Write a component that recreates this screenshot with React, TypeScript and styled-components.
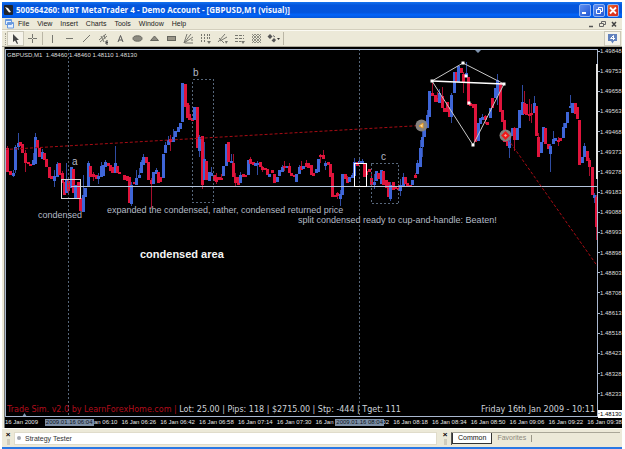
import React from "react";
import styled, { createGlobalStyle, css } from "styled-components";

const GlobalStyle = createGlobalStyle`
  * { box-sizing: border-box; }
  html, body { margin: 0; background: #fff; }
  body { font-family: "Liberation Sans", Arial, sans-serif; font-size: 7px; }
  button { font: inherit; color: inherit; margin: 0; padding: 0; border: 0; background: none; }
`;

const Window = styled.main`
  margin: 2px 3px 0 2px;
  background: #ece9d8;
  border-bottom: 2px solid #2a78e4;
`;

const TitleBar = styled.header`
  display: flex;
  align-items: center;
  gap: 3px;
  height: 16px;
  padding: 0 3px 0 2px;
  background: linear-gradient(#1573ee, #0455dc 20%, #0355dd 65%, #0264fa 80%, #0456d8);
`;

const Title = styled.h1`
  flex: 1;
  margin: 0;
  font: bold 8px/14px "Open Sans", "Noto Sans", sans-serif;
  color: #f4f8ff;
  white-space: nowrap;
  overflow: hidden;
`;

const Controls = styled.div`
  display: flex;
  gap: 2px;
`;

const TitleButton = styled.button<{ $close?: boolean }>`
  display: flex;
  width: 12px;
  height: 13px;
  border: 1px solid #8fb3f3;
  border-radius: 2px;
  background: ${(p) => (p.$close ? "linear-gradient(135deg, #e8792e, #e03a1c 45%, #d52c20)" : "linear-gradient(135deg, #5c8df0, #2458d3)")};
  svg { width: 10px; height: 11px; }
`;

const MenuBar = styled.nav`
  display: flex;
  align-items: center;
  height: 12px;
  padding: 0 3px;
  border-bottom: 1px solid #d3cfbd;
  color: #222;
`;

const MenuItems = styled.div`
  display: flex;
  flex: 1;
  gap: 8px;
  margin-left: 4px;
  line-height: 11px;
`;

const MdiButton = styled.button`
  display: flex;
  width: 11px;
  height: 10px;
  svg { width: 11px; height: 10px; }
`;

const Toolbar = styled.div`
  display: flex;
  align-items: center;
  height: 17px;
  padding: 0 1px 0 3px;
  border-top: 1px solid #fbfaf3;
  border-bottom: 1px solid #aca899;
`;

const Grip = styled.span`
  width: 2px;
  height: 12px;
  border-left: 1px dotted #a29f90;
`;

const ToolButton = styled.button<{ $active?: boolean }>`
  display: flex;
  align-items: center;
  justify-content: center;
  width: 17px;
  height: 15px;
  ${(p) => p.$active && css`background: #f5f3ea; border: 1px solid #cbc8b8;`}
  svg { width: 13px; height: 13px; flex: none; }
`;

const Divider = styled.span`
  width: 1px;
  height: 13px;
  margin: 0 1px;
  background: #bab6a5;
`;

const Spacer = styled.span`
  flex: 1;
`;

const ChartWindow = styled.section`
  display: grid;
  grid-template-columns: minmax(0, 1fr) 24px;
  margin-left: 2px;
  padding-top: 2px;
  background: #000;
  border-left: 1px solid #77776f;
  overflow: hidden;
`;

const Plot = styled.svg`
  display: block;
  width: 100%;
  height: auto;
  font-family: "Liberation Sans", Arial, sans-serif;
`;

const PriceAxis = styled.ol`
  display: flex;
  flex-direction: column;
  justify-content: space-between;
  list-style: none;
  margin: -2px 0 -1px;
  padding: 0;
  font-size: 6px;
  line-height: 8px;
  color: #ddd;
`;

const Price = styled.li<{ $current?: boolean }>`
  display: flex;
  align-items: center;
  height: 8px;
  &::before { content: ""; width: 2px; height: 1px; background: #a9b8cc; }
  ${(p) => p.$current && css`background: #fff; color: #000;`}
`;

const TimeAxis = styled.div`
  grid-column: 1 / -1;
  display: grid;
  grid-template-columns: repeat(16, minmax(0, 1fr));
  margin-right: -4px;
  height: 11px;
  padding-top: 2px;
  font-size: 6px;
  line-height: 7px;
  color: #e6e6e6;
  white-space: nowrap;
`;

const Time = styled.span`
  position: relative;
`;

const TimeMarker = styled.span`
  position: absolute;
  left: 1px;
  top: 0;
  padding: 0 1px;
  background: #7d8fa6;
  color: #0c131c;
  z-index: 1;
`;

const SecondMarker = styled(TimeMarker)`
  left: -19px;
`;

const BottomPanels = styled.footer`
  display: flex;
  align-items: center;
  height: 19px;
  padding: 1px 2px;
  border-top: 1px solid #fffef8;
  color: #333;
`;

const CloseButton = styled.button`
  width: 8px;
  height: 14px;
  margin-right: 2px;
  font: bold 8px/8px "Liberation Sans", sans-serif;
  color: #000;
  text-align: center;
  display: flex;
  flex-direction: column;
  align-items: center;
  &::after { content: ""; width: 3px; height: 6px; background: #d0ccbc; }
`;

const TesterTitle = styled.div`
  flex: 1;
  display: flex;
  align-items: center;
  gap: 4px;
  height: 13px;
  padding-left: 2px;
  margin-right: 4px;
  background: #fff;
  border: 1px solid #e0dccb;
`;

const Dot = styled.span`
  width: 4px;
  height: 4px;
  border-radius: 50%;
  background: #a5a8b0;
`;

const Tabs = styled.div`
  display: flex;
  align-items: flex-start;
  width: 169px;
  height: 13px;
  border-left: 1px solid #555;
  border-top: 1px solid #aaa798;
`;

const Tab = styled.button<{ $selected?: boolean }>`
  height: 11px;
  padding: 0 5px;
  line-height: 10px;
  color: #8c897c;
  ${(p) => p.$selected && css`color: #111; background: #fff; border: 1px solid #333; border-top: 0;`}
`;

const TabDivider = styled.span`
  width: 1px;
  height: 7px;
  margin-top: 2px;
  background: #999688;
`;

type Candle = [x: number, dir: "u" | "d", top: number, bottom: number, high?: number, low?: number];

const candles: Candle[] = [
  [7, "d", 148, 172, 146], [10, "d", 171, 175], [13, "u", 173, 176, 170, 177], [15, "u", 147, 170, 145, 173],
  [18, "u", 143, 147, 133, 150], [20, "d", 142, 146], [22, "d", 144, 153], [25, "d", 153, 163, 150, 172],
  [28, "d", 162, 164], [30, "d", 164, 166], [33, "u", 160, 165, 153], [35, "u", 137, 164, 133], [37, "d", 140, 148],
  [39, "d", 148, 157], [42, "u", 152, 159, 149], [44, "d", 153, 160], [46, "d", 159, 167], [49, "d", 167, 178],
  [51, "d", 176, 179], [54, "u", 176, 181, 170, 187], [57, "u", 164, 177, 162], [59, "d", 163, 175],
  [62, "d", 173, 183, 171], [64, "d", 182, 195], [66, "u", 179, 193, 163], [68, "d", 181, 191, 178, 194],
  [71, "u", 167, 188], [73, "d", 169, 193], [75, "u", 185, 199], [78, "d", 182, 198], [80, "d", 198, 211],
  [83, "u", 195, 212, 175], [85, "u", 188, 197], [88, "u", 163, 187, 161], [90, "d", 166, 177], [93, "d", 174, 177, 172, 181],
  [96, "d", 175, 179], [98, "u", 176, 179, 173, 184], [101, "u", 166, 177, 162], [103, "u", 165, 176],
  [105, "u", 162, 167, 160], [108, "d", 163, 166], [110, "d", 165, 171], [112, "d", 167, 173], [115, "u", 163, 173, 146],
  [117, "d", 166, 173], [119, "d", 172, 174], [124, "d", 175, 180], [127, "d", 176, 181], [129, "d", 177, 203],
  [131, "u", 185, 204, 182, 206], [134, "d", 182, 184], [136, "u", 178, 185, 170], [139, "u", 175, 178, 168],
  [141, "u", 162, 173, 160], [143, "u", 157, 165, 154], [146, "d", 157, 163], [148, "d", 162, 180], [151, "d", 180, 184, 178, 208],
  [153, "u", 172, 184], [156, "u", 170, 174, 168], [158, "d", 172, 183], [160, "d", 177, 182], [163, "u", 154, 178],
  [165, "u", 145, 153, 142], [168, "u", 140, 145, 136], [170, "d", 139, 142, 135, 151], [173, "u", 137, 142, 129],
  [175, "u", 131, 137], [178, "u", 127, 132], [180, "u", 123, 129], [182, "u", 83, 122], [185, "d", 84, 107],
  [187, "d", 103, 118], [189, "d", 114, 120, 105], [192, "d", 118, 121], [194, "u", 107, 120], [197, "d", 107, 148],
  [199, "u", 137, 151, 135, 157], [202, "d", 136, 185, 136, 189], [204, "u", 159, 180, 142], [206, "d", 161, 180],
  [209, "u", 172, 181], [211, "u", 173, 176, 167], [214, "d", 175, 181], [216, "d", 177, 182, 173, 184], [219, "d", 177, 180],
  [221, "d", 178, 180, 174], [223, "u", 166, 176], [226, "u", 144, 166], [228, "d", 142, 162], [231, "u", 161, 163, 154],
  [233, "d", 163, 177, 154], [235, "d", 177, 183, 173, 187], [238, "d", 177, 185], [240, "u", 175, 183, 172],
  [243, "d", 174, 177], [245, "d", 175, 177], [248, "u", 160, 175], [250, "d", 159, 164, 157], [253, "d", 162, 165],
  [255, "u", 163, 166], [257, "u", 163, 165, 161, 175], [260, "d", 162, 167], [262, "d", 167, 170, 166, 172],
  [265, "d", 168, 170], [267, "d", 169, 175], [269, "u", 174, 177], [272, "d", 170, 173], [274, "d", 174, 183],
  [277, "u", 177, 182], [279, "u", 170, 176], [282, "u", 167, 172, 165], [284, "d", 166, 168, 161, 171], [287, "u", 166, 168],
  [289, "d", 166, 173, 163], [291, "d", 173, 176], [294, "d", 175, 177], [296, "u", 174, 182], [299, "u", 167, 174, 165],
  [301, "d", 166, 170, 161, 170], [303, "u", 166, 169], [306, "d", 163, 167, 160], [308, "d", 163, 168], [311, "d", 165, 175],
  [313, "d", 173, 176], [316, "u", 169, 173], [318, "u", 159, 172], [320, "d", 155, 157, 154, 163], [323, "d", 155, 159, 150],
  [325, "u", 163, 166, 161, 170], [328, "d", 162, 165], [330, "d", 164, 177], [332, "d", 173, 197], [335, "d", 195, 197],
  [337, "d", 193, 196, 192, 199], [340, "u", 194, 199, 190, 206], [342, "u", 174, 195], [345, "d", 174, 179],
  [347, "d", 178, 183, 176], [349, "u", 177, 182], [352, "u", 175, 178, 173], [354, "u", 162, 176, 158], [357, "d", 162, 166],
  [359, "u", 161, 163, 157], [362, "u", 161, 164, 159], [364, "d", 163, 177], [366, "d", 171, 175], [369, "d", 169, 172],
  [371, "d", 178, 185, 173], [374, "u", 182, 185, 174, 189], [376, "u", 171, 181], [378, "d", 173, 179], [381, "u", 170, 184],
  [383, "d", 171, 185], [386, "d", 180, 188], [388, "d", 182, 197], [390, "u", 185, 199, 182, 201], [393, "d", 182, 190],
  [395, "d", 187, 189], [398, "d", 188, 190, 184], [400, "u", 185, 191, 179, 196], [403, "u", 177, 186, 173],
  [405, "d", 177, 184], [407, "d", 183, 186], [410, "d", 185, 187], [412, "u", 180, 185], [415, "d", 175, 178, 173],
  [417, "u", 163, 174, 160], [420, "u", 148, 167, 140], [422, "u", 137, 147, 128, 157], [424, "u", 128, 137, 126],
  [427, "u", 115, 128, 110], [429, "u", 91, 117], [432, "d", 93, 96, 83], [435, "d", 95, 102], [437, "d", 98, 102, 92],
  [439, "u", 93, 103, 89], [442, "d", 96, 108, 87], [444, "d", 108, 112], [447, "d", 102, 112], [449, "d", 107, 117],
  [451, "u", 95, 117, 93, 123], [454, "u", 72, 93], [456, "d", 72, 82], [458, "u", 66, 82], [461, "d", 68, 73],
  [463, "d", 74, 82, 72, 93], [466, "u", 73, 77, 62], [468, "d", 77, 105], [470, "d", 103, 106], [473, "d", 104, 108],
  [475, "d", 104, 142], [478, "u", 123, 141], [480, "u", 118, 124], [482, "u", 117, 120, 114], [485, "d", 116, 120, 115, 124],
  [487, "d", 122, 125], [490, "u", 108, 118], [492, "d", 98, 108], [495, "u", 88, 98], [497, "u", 80, 95, 74, 105],
  [500, "d", 83, 112], [502, "d", 110, 122], [504, "d", 120, 142], [507, "d", 138, 146], [509, "u", 137, 148, 132, 158],
  [512, "u", 128, 136], [514, "d", 128, 140, 127, 151], [517, "u", 128, 140], [519, "u", 110, 128], [522, "u", 102, 115, 85],
  [524, "d", 103, 114, 91], [526, "d", 104, 115], [529, "d", 114, 116, 99, 121], [531, "d", 113, 115, 104, 123],
  [534, "u", 103, 113, 96], [536, "d", 106, 136], [538, "d", 137, 157, 133], [541, "u", 142, 153], [543, "u", 127, 142],
  [545, "d", 128, 144], [548, "d", 144, 149], [550, "u", 146, 154, 144, 172], [553, "u", 139, 144, 131], [555, "u", 138, 141],
  [558, "d", 140, 142, 137, 146], [560, "d", 138, 141], [563, "u", 127, 138, 123], [565, "u", 123, 128], [567, "u", 112, 123],
  [570, "u", 106, 108, 95], [572, "u", 103, 113], [575, "d", 103, 114], [577, "d", 107, 119], [579, "d", 120, 165],
  [582, "u", 157, 163], [584, "u", 146, 157, 143], [587, "d", 151, 161], [589, "d", 160, 167, 158, 176], [592, "d", 167, 195],
  [594, "u", 195, 198, 193, 203], [596, "d", 197, 227, 195, 240],
];

const prices = [
  "1.49848", "1.49753", "1.49658", "1.49563", "1.49468", "1.49373", "1.49278", "1.49183", "1.49088", "1.48993",
  "1.48898", "1.48803", "1.48708", "1.48613", "1.48518", "1.48423", "1.48328", "1.48233", "1.48130",
];

const times: { label: string; marker?: string }[] = [
  { label: "16 Jan 2009" }, { label: "", marker: "2009.01.16 06:04" }, { label: "16 Jan 06:10" }, { label: "16 Jan 06:26" },
  { label: "16 Jan 06:42" }, { label: "16 Jan 06:58" }, { label: "16 Jan 07:14" }, { label: "16 Jan 07:30" },
  { label: "16 Jan 07:46" }, { label: "16 Jan 08:02" }, { label: "16 Jan 08:18" }, { label: "16 Jan 08:34" },
  { label: "16 Jan 08:50" }, { label: "16 Jan 09:06" }, { label: "16 Jan 09:22" }, { label: "16 Jan 09:38" },
];

const handles = [[432, 81], [463, 63], [504, 84], [473, 145], [466, 76], [469, 103]];

const dash = "#56667a";

function PriceChart() {
  return (
    <Plot viewBox="5 49 593 368" role="img" aria-label="GBPUSD one minute candlestick chart">
      <g shapeRendering="crispEdges">
        {candles.map(([x, dir, top, bottom, high = top, low = bottom]) => (
          <g key={x} fill={dir === "u" ? "#3f66d8" : "#e0143c"}>
            <rect x={x} y={high} width="1" height={low - high} opacity="0.75" />
            <rect x={x - 1} y={top} width="3" height={bottom - top} />
          </g>
        ))}
        <g fill="none" stroke={dash} strokeDasharray="2 2">
          <path d="M68.5 49V417M359.5 49V417" />
          <rect x="192.500" y="79.500" width="21" height="123" />
          <rect x="371.500" y="163.500" width="27" height="40" />
        </g>
        <path d="M71 186.500H598" stroke="#b4c4dc" />
        <rect x="61.500" y="179.500" width="19" height="19" fill="none" stroke="#d8d8d8" />
        <rect x="354.500" y="163.500" width="12" height="23" fill="none" stroke="#fff" />
      </g>
      <g fill="none" stroke="#a80c14" strokeDasharray="3 2">
        <path d="M5 149.500L421 125.500" />
        <path d="M505 135L598 267" />
      </g>
      <g fill="#85827f">
        <circle cx="421.500" cy="125.500" r="6" />
        <circle cx="505.500" cy="135.500" r="6" />
      </g>
      <path d="M419 126L423 123V128Z" fill="#ffe0a0" stroke="#e89820" />
      <path d="M505.500 132.500L508.500 135.500L505.500 138.500L502.500 135.500Z" fill="#ff9a90" stroke="#f01818" strokeWidth="2" />
      <path d="M432 81L463 63L504 84L473 145Z" fill="none" stroke="#c8c8c8" />
      <path d="M432 81L504 84" stroke="#fff" strokeWidth="1.500" />
      {handles.map(([x, y]) => (
        <rect key={x} x={x - 1.5} y={y - 1.5} width="3" height="3" fill="#fff" />
      ))}
      <g fill="#b4bbc6" fontSize="9">
        <text x="72" y="165" fontSize="10">a</text>
        <text x="193" y="76" fontSize="10">b</text>
        <text x="381" y="160" fontSize="10">c</text>
        <text x="38" y="218">condensed</text>
        <text x="107" y="213">expanded the condensed, rather, condensed returned price</text>
        <text x="298" y="223">split condensed ready to cup-and-handle: Beaten!</text>
      </g>
      <text x="140" y="258" fontSize="11" fontWeight="bold" fill="#f4f4f4">condensed area</text>
      <text x="7" y="57" fontSize="6" fill="#dcdcdc">GBPUSD,M1&nbsp; 1.48460 1.48460 1.48110 1.48130</text>
      <g fontFamily="DejaVu Sans, sans-serif" fontSize="8">
        <text x="7" y="412" fill="#cfd3da">
          <tspan fill="#b00d1c">Trade Sim. v2.0 by LearnForexHome.com | </tspan>
          Lot: 25.00 | Pips: 118 | $2715.00 | Stp: -444 | Tget: 111
        </text>
        <text x="595" y="412" fill="#cfd3da" textAnchor="end">Friday 16th Jan 2009 - 10:11</text>
      </g>
      <path d="M475 50H481L478 53ZM22 417L24.500 413L27 417Z" fill="#7f93ad" />
      <path d="M5.500 417V49.500H597.500V416.500H5" fill="none" stroke="#a9b8d0" shapeRendering="crispEdges" />
      <path d="M597 64V179" stroke="#e4e4e4" strokeWidth="2" />
    </Plot>
  );
}

const g = "#77776f";

const tools: { name: string; art: React.ReactNode; active?: boolean; divider?: boolean }[] = [
  { name: "Cursor", active: true, art: <path d="M4 2V10L6 8.500L8 12L9 11.500L7.500 8H10Z" fill="#444" stroke="none" /> },
  { name: "Crosshair", divider: true, art: <path d="M6.500 2V6M6.500 7V11M2 6.500H6M7 6.500H11" /> },
  { name: "Vertical line", art: <path d="M6.500 3V11" /> },
  { name: "Horizontal line", art: <path d="M3 6.500H10" /> },
  { name: "Trendline", art: <path d="M3 10L10 3" /> },
  { name: "Equidistant channel", art: <><path d="M2 8L9 2M3 10L10 4M4 4L7 10M7 3L8 7" /><path d="M9 9H11M9 9V12H11M9 10.500H11" stroke="#444" /></> },
  { name: "Text", art: <path d="M4 10L6.500 3.500L9 10M5 8H8" stroke="#555" /> },
  { name: "Ellipse", art: <ellipse cx="6.500" cy="6.500" rx="4.500" ry="2.700" fill="#8c8a80" stroke="#66665e" /> },
  { name: "Triangle", art: <path d="M2.500 8.500L6.500 4L10.500 8.500Z" fill="#8c8a80" stroke="#66665e" /> },
  { name: "Rectangle", art: <rect x="2.500" y="4.500" width="8" height="4" fill="#9a9688" stroke="#66665e" /> },
  { name: "Fibonacci fan", art: <path d="M2 11L5 2M2 11L9 2M2 11L11 5M3 11H11M9 8H11" /> },
  { name: "Fibonacci time zones", art: <><path d="M2.500 2V10M5.500 2V10M8.500 2V8M10.500 2V7" strokeDasharray="2 1" /><path d="M8 9H12L10 12Z" fill={g} stroke="none" /></> },
  { name: "Gann line", art: <><path d="M2 10L9 2M3 6L8 11M4 9L11 5" /><path d="M9 9H12L10 12Z" fill={g} stroke="none" /></> },
  { name: "Fibonacci retracement", art: <><path d="M2 3.500H11M2 6.500H11M2 9.500H8" strokeDasharray="3 1" /><path d="M8 9H12L10 12Z" fill={g} stroke="none" /></> },
  { name: "Gann grid", art: <path d="M2 5L5 2M2 8L8 2M2 11L11 2M5 11L11 5M8 11L11 8M2 2L11 11M2 5L8 11M5 2L11 8M2 8L5 11M8 2L11 5" strokeWidth="0.800" /> },
  { name: "Arrows", divider: true, art: <><path d="M3 2L5.500 4.500L3 7L0.500 4.500ZM7 6L9 8L7 10.500L4.500 8.500Z" fill="#555" stroke="none" /><path d="M6 3.500L8 5" stroke="#666" /><path d="M10 6H13L11.500 8Z" fill="#333" stroke="none" /></> },
];

export default function App() {
  return (
    <>
      <GlobalStyle />
      <Window>
        <TitleBar>
          <svg width="9" height="10" viewBox="0 0 9 10" aria-hidden="true">
            <rect width="9" height="10" rx="1" fill="#20242c" />
            <path d="M1 2L4 3L7 7L5 7.500L3 5Z" fill="#f4f4f4" />
          </svg>
          <Title>500564260: MBT MetaTrader 4 - Demo Account - [GBPUSD,M1 (visual)]</Title>
          <Controls>
            <TitleButton aria-label="Minimize">
              <svg viewBox="0 0 10 11"><path d="M2 8H6" stroke="#fff" strokeWidth="2" /></svg>
            </TitleButton>
            <TitleButton aria-label="Restore">
              <svg viewBox="0 0 10 11"><path d="M4.500 4V2.500H8.500V6.500H7M2.500 4.500H6.500V8.500H2.500Z" stroke="#fff" fill="none" /></svg>
            </TitleButton>
            <TitleButton aria-label="Close" $close>
              <svg viewBox="0 0 10 11"><path d="M2 2.500L8 8.500M8 2.500L2 8.500" stroke="#fff" strokeWidth="1.800" /></svg>
            </TitleButton>
          </Controls>
        </TitleBar>

        <MenuBar aria-label="Main menu">
          <svg width="9" height="10" viewBox="0 0 9 10" aria-hidden="true">
            <path d="M0.500 0.500H6.500V5.500H0.500ZM2.500 3.500H8.500V9H2.500Z" fill="#e8f2ff" stroke="#6a9be0" />
            <path d="M1 1.500H6M3 4.500H8" stroke="#6a9be0" />
          </svg>
          <MenuItems>
            {["File", "View", "Insert", "Charts", "Tools", "Window", "Help"].map((item) => (
              <button key={item}>{item}</button>
            ))}
          </MenuItems>
          <MdiButton aria-label="Minimize chart">
            <svg viewBox="0 0 11 10"><path d="M3 7.500H7" stroke="#555" strokeWidth="1.500" /></svg>
          </MdiButton>
          <MdiButton aria-label="Restore chart">
            <svg viewBox="0 0 11 10"><path d="M4.500 4V2.500H8.500V5.500H7M2.500 4.500H6.500V7.500H2.500Z" stroke="#666" fill="none" /></svg>
          </MdiButton>
          <MdiButton aria-label="Close chart">
            <svg viewBox="0 0 11 10"><path d="M4 3L8 7.500M8 3L4 7.500" stroke="#444" strokeWidth="1.500" /></svg>
          </MdiButton>
        </MenuBar>

        <Toolbar role="toolbar" aria-label="Line studies">
          <Grip />
          {tools.map(({ name, art, active, divider }) => (
            <React.Fragment key={name}>
              <ToolButton aria-label={name} $active={active}>
                <svg viewBox="0 0 13 13" fill="none" stroke={g}>{art}</svg>
              </ToolButton>
              {divider && <Divider />}
            </React.Fragment>
          ))}
          <Spacer />
          <ToolButton aria-label="Notifications, 4" $active>
            <svg viewBox="0 0 13 13">
              <path d="M2 2H11V9H8L6.500 11.500L5 9H2Z" fill="#6282bd" />
              <path d="M7.500 8V3.500L4.500 6.500H9" fill="none" stroke="#fff" />
            </svg>
          </ToolButton>
        </Toolbar>

        <ChartWindow>
          <PriceChart />
          <PriceAxis>
            {prices.map((p, i) => (
              <Price key={p} $current={i === prices.length - 1}>{p}</Price>
            ))}
          </PriceAxis>
          <TimeAxis>
            {times.map(({ label, marker }, i) => (
              <Time key={i}>
                {label}
                {marker && <TimeMarker>{marker}</TimeMarker>}
                {label === "16 Jan 08:02" && <SecondMarker>2009.01.16 08:04</SecondMarker>}
              </Time>
            ))}
          </TimeAxis>
        </ChartWindow>

        <BottomPanels>
          <CloseButton aria-label="Close tester">×</CloseButton>
          <TesterTitle><Dot />Strategy Tester</TesterTitle>
          <CloseButton aria-label="Close navigator">×</CloseButton>
          <Tabs role="tablist">
            <Tab role="tab" aria-selected="true" $selected>Common</Tab>
            <Tab role="tab" aria-selected="false">Favorites</Tab>
            <TabDivider />
          </Tabs>
        </BottomPanels>
      </Window>
    </>
  );
}
